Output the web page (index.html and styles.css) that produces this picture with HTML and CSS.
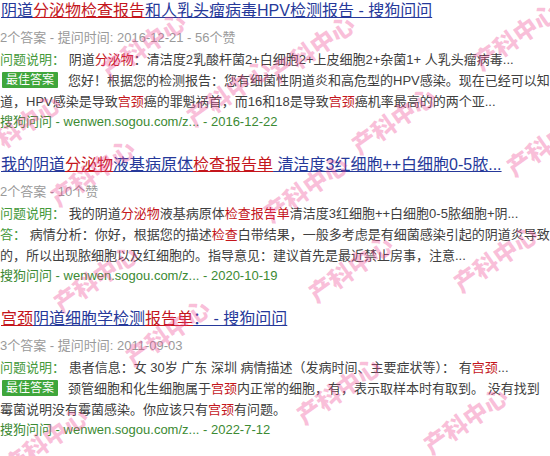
FILE: index.html
```html
<!DOCTYPE html>
<html lang="zh-CN">
<head>
<meta charset="utf-8">
<title>搜索结果</title>
<link rel="stylesheet" href="styles.css">
</head>
<body>
<div class="page">
  <div class="result">
    <h3 class="title"><a href="#">阴道<em>分泌物检查报告</em>和人乳头瘤病毒HPV检测报告 - 搜狗问问</a></h3>
    <div class="meta">2个答案 - 提问时间: 2016-12-21 - 56个赞</div>
    <p class="desc"><span class="label">问题说明：</span> 阴道<em class="hl">分泌物</em>：清洁度2乳酸杆菌2+白细胞2+上皮细胞2+杂菌1+ 人乳头瘤病毒...</p>
    <p class="answer"><span class="badge">最佳答案</span>您好！根据您的检测报告：您有细菌性阴道炎和高危型的HPV感染。现在已经可以知道，HPV感染是导致<em class="hl">宫颈</em>癌的罪魁祸首，而16和18是导致<em class="hl">宫颈</em>癌机率最高的的两个亚...</p>
    <div class="url">搜狗问问 - wenwen.sogou.com/z... - 2016-12-22</div>
  </div>
  <div class="result">
    <h3 class="title"><a href="#">我的阴道<em>分泌物</em>液基病原体<em>检查报告单</em> 清洁度3红细胞++白细胞0-5脓...</a></h3>
    <div class="meta">2个答案 - 10个赞</div>
    <p class="desc"><span class="label">问题说明：</span> 我的阴道<em class="hl">分泌物</em>液基病原体<em class="hl">检查报告单</em>清洁度3红细胞++白细胞0-5脓细胞+阴...</p>
    <p class="answer"><span class="label">答：</span> 病情分析：你好，根据您的描述<em class="hl">检查</em>白带结果，一般多考虑是有细菌感染引起的阴道炎导致的，所以出现脓细胞以及红细胞的。指导意见：建议首先是最近禁止房事，注意...</p>
    <div class="url">搜狗问问 - wenwen.sogou.com/z... - 2020-10-19</div>
  </div>
  <div class="result">
    <h3 class="title"><a href="#"><em>宫颈</em>阴道细胞学检测<em>报告单</em>： - 搜狗问问</a></h3>
    <div class="meta">3个答案 - 提问时间: 2011-09-03</div>
    <p class="desc"><span class="label">问题说明：</span> 患者信息：女 30岁 广东 深圳 病情描述（发病时间、主要症状等）： 有<em class="hl">宫颈</em>...</p>
    <p class="answer"><span class="badge">最佳答案</span>颈管细胞和化生细胞属于<em class="hl">宫颈</em>内正常的细胞，有，表示取样本时有取到。 没有找到霉菌说明没有霉菌感染。你应该只有<em class="hl">宫颈</em>有问题。</p>
    <div class="url">搜狗问问 - wenwen.sogou.com/z... - 2022-7-12</div>
  </div>

  <div class="wm-layer" aria-hidden="true">
    <span class="wm wm1">产科中心</span>
    <span class="wm wm2">产科中心</span>
    <span class="wm wm3">产科中心</span>
    <span class="wm wm4">产科中心</span>
    <span class="wm wm5">产科中心</span>
    <span class="wm wm6">产科中心</span>
    <span class="wm wm7">产科中心</span>
    <span class="wm wm8">产科中心</span>
    <span class="wm wm9">产科中心</span>
    <span class="wm wm10">产科中心</span>
    <span class="wm wm11">产科中心</span>
    <span class="wm wm12">产科中心</span>
    <span class="wm wm13">产科中心</span>
    <span class="wm wm14">产科中心</span>
    <span class="wm wm15">产科中心</span>
    <span class="wm wm16">产科中心</span>
  </div>
</div>
</body>
</html>
```

FILE: styles.css
```css
html, body {
  margin: 0;
  padding: 0;
  background: #fff;
}
body {
  font-family: "Liberation Sans", Arial, "Noto Sans CJK SC", sans-serif;
  color: #404040;
}
.page {
  position: relative;
  width: 550px;
  height: 456px;
  padding: 0;
  overflow: hidden;
}
.result {
  margin-bottom: 22px;
}
.title {
  margin: 0;
  padding-left: 1px;
  font-size: 16px;
  font-weight: normal;
  line-height: 22px;
  white-space: nowrap;
}
.title a {
  color: #26399a;
  text-decoration: underline;
}
.title em {
  font-style: normal;
  color: #c4161c;
  text-decoration: underline;
}
.hl {
  font-style: normal;
  color: #c4161c;
}
.meta {
  margin: 6px 0 2px;
  font-size: 13px;
  line-height: 20px;
  color: #9a9a9a;
}
.desc,
.answer {
  margin: 0;
  font-size: 13px;
  line-height: 20px;
  color: #404040;
}
.answer {
  line-height: 21px;
}
.label {
  color: #45993a;
}
.badge {
  display: inline-block;
  background: #3fa63b;
  color: #fff;
  font-size: 12px;
  line-height: 16px;
  padding: 0 4px;
  margin: 0 10px 0 2px;
  border-radius: 1px;
  vertical-align: 1px;
}
.url {
  font-size: 13px;
  line-height: 20px;
  color: #3c8a33;
}

/* watermark overlay */
.wm-layer {
  position: absolute;
  inset: 0;
  pointer-events: none;
}
.wm {
  position: absolute;
  font-family: "Noto Sans CJK SC", sans-serif;
  font-weight: 900;
  font-size: 24px;
  line-height: 1;
  white-space: nowrap;
  color: rgba(238, 70, 145, 0.34);
  transform: translate(-50%, -50%) rotate(-35deg);
}
.wm1 { left: 143px; top: 45px; }
.wm2 { left: 312px; top: 48px; }
.wm3 { left: 515px; top: 36px; }
.wm4 { left: 228px; top: 92px; }
.wm5 { left: 393px; top: 120px; }
.wm6 { left: 18px; top: 127px; }
.wm7 { left: 548px; top: 142px; }
.wm8 { left: 92px; top: 172px; }
.wm9 { left: 305px; top: 188px; }
.wm10 { left: 350px; top: 268px; }
.wm11 { left: 495px; top: 258px; }
.wm12 { left: 95px; top: 278px; }
.wm13 { left: 167px; top: 332px; }
.wm14 { left: 338px; top: 390px; }
.wm15 { left: 465px; top: 420px; }
.wm16 { left: 45px; top: 440px; }
```
